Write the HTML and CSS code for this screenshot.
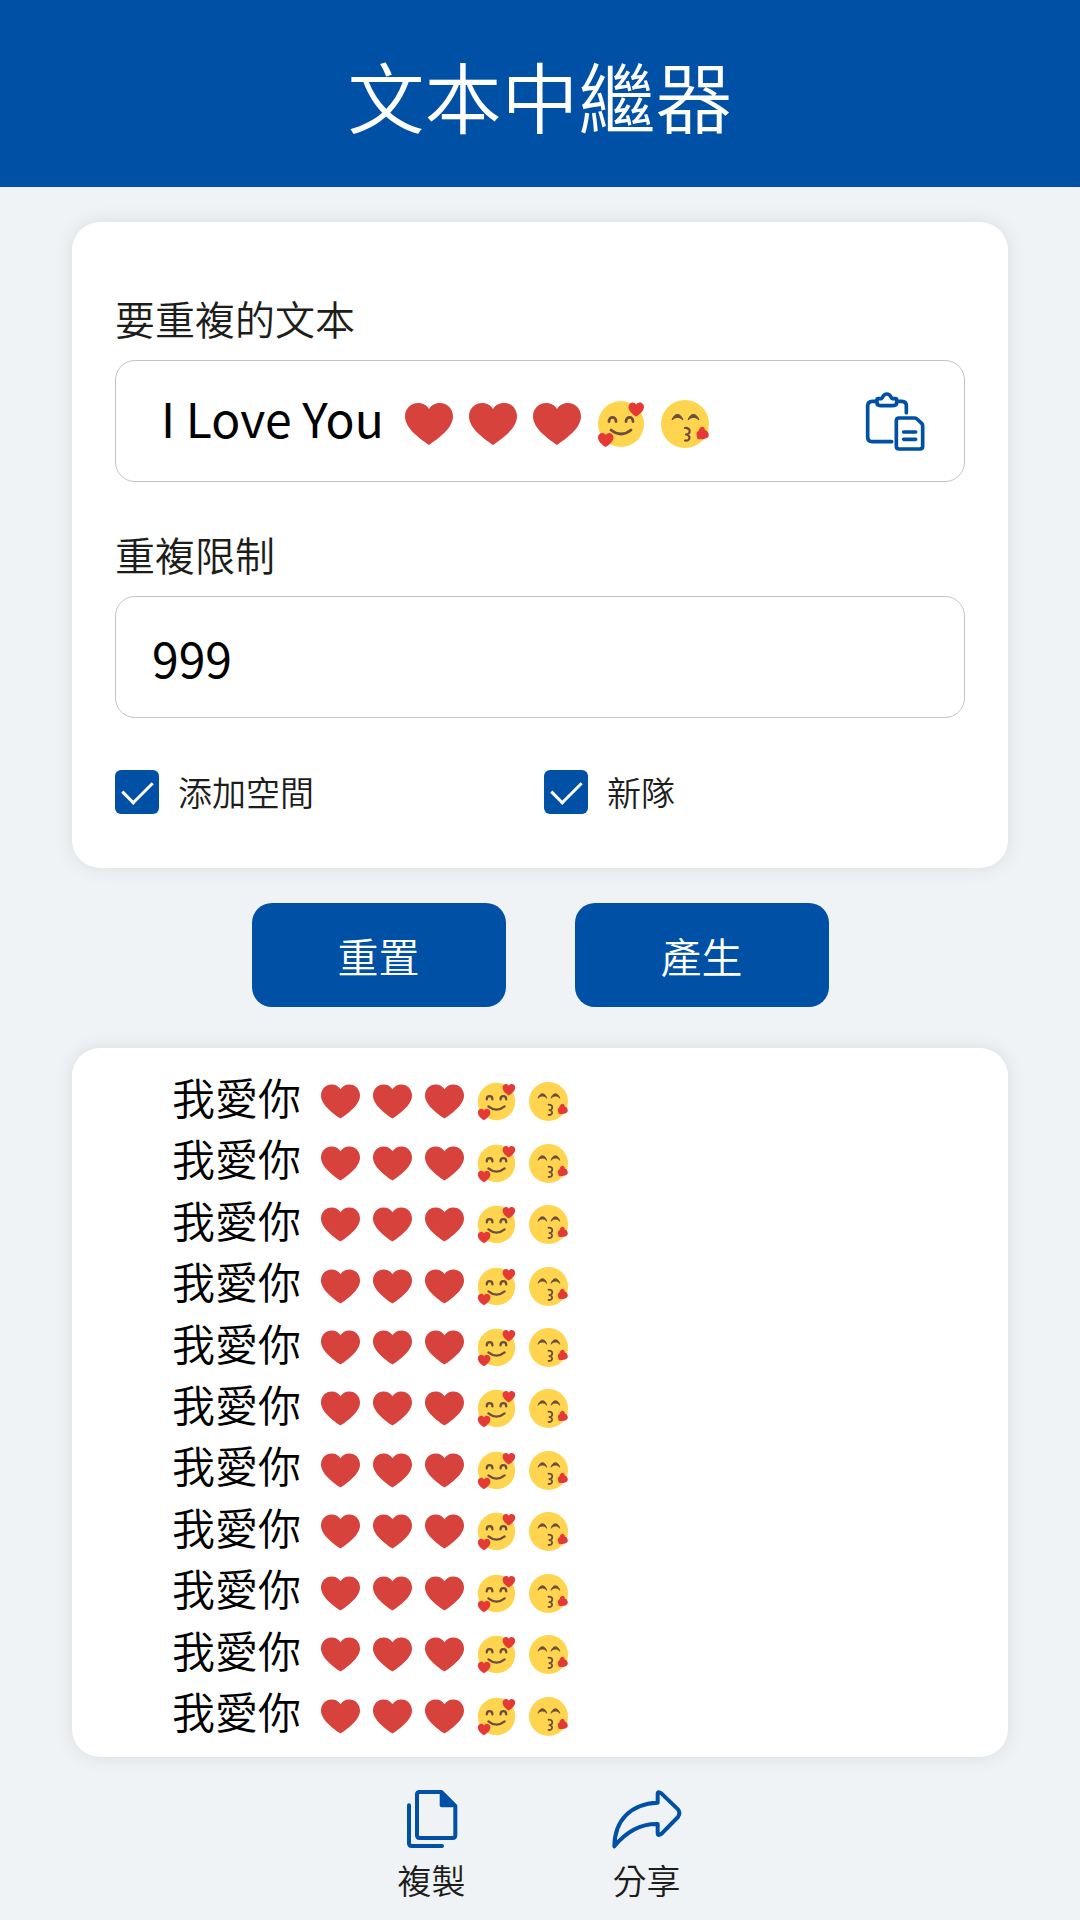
FILE: index.html
```html
<!DOCTYPE html>
<html lang="zh-Hant">
<head>
<meta charset="utf-8">
<meta name="viewport" content="width=device-width, initial-scale=1">
<title>文本中繼器</title>
<link rel="stylesheet" href="styles.css">
</head>
<body>
<svg class="sprite" aria-hidden="true">
  <symbol id="heart" viewBox="0 0 48 48">
    <path fill="#d7433c" d="M24 45C17 40 0 29 0 16.500C0 8.500 6 3 13 3C18 3 22 5.500 24 9C26 5.500 30 3 35 3C42 3 48 8.500 48 16.500C48 29 31 40 24 45Z"/>
  </symbol>
  <symbol id="love" viewBox="0 0 48 48">
    <circle cx="24" cy="24" r="23" fill="#ffd54f"/>
    <path d="M12 21.500C12 16 19 16 19 21.500M29 21.500C29 16 36 16 36 21.500M14 30Q24 38 34 30" fill="none" stroke="#6d4c41" stroke-width="2.800" stroke-linecap="round"/>
    <path fill="#e53935" d="M39 16.500C35 14 31.500 10.500 31.500 7C31.500 2 37.500 1 39.200 4.500C41 1 47 2 47 7C47 10.500 43 14.500 39 16.500Z"/>
    <path fill="#e53935" d="M8.500 47C4.500 44.500 1 41 1 37.500C1 32.500 7 31.500 8.700 35C10.500 31.500 16.500 32.500 16.500 37.500C16.500 41 12.500 45 8.500 47Z"/>
  </symbol>
  <symbol id="kiss" viewBox="0 0 48 48">
    <circle cx="24" cy="24" r="24" fill="#ffd54f"/>
    <path d="M11 20C13.500 12.500 19.500 12.500 22 20C18.500 16.500 14.500 16.500 11 20ZM27 20C29.500 12.500 35.500 12.500 38 20C34.500 16.500 30.500 16.500 27 20Z" fill="#6d4c41" stroke="#6d4c41" stroke-width="1" stroke-linejoin="round"/>
    <path d="M24 28C30 27.500 30 34 25 34.500C30 35 29.500 41.500 24 40.500" fill="none" stroke="#6d4c41" stroke-width="2.200" stroke-linecap="round" stroke-linejoin="round"/>
    <path fill="#e53935" d="M36 37C35 34 35.500 32 37.500 31C38.500 26 43.500 25 44 30C48 31 49 36.500 46 38C43 39.500 39 39.500 36.500 39Z"/>
  </symbol>
</svg>

<header class="header"><h1 class="title">文本中繼器</h1></header>

<main class="page">
  <form class="card form">
    <label class="label" for="text">要重複的文本</label>
    <div class="field">
      <input class="text-input" id="text" type="text" value="I Love You">
      <span class="emojis">
        <svg><use href="#heart"/></svg><svg><use href="#heart"/></svg><svg><use href="#heart"/></svg><svg><use href="#love"/></svg><svg><use href="#kiss"/></svg>
      </span>
      <button class="icon-button" type="button" aria-label="貼上">
        <svg class="paste-icon line-icon" viewBox="76 92 180 180">
          <path d="M156 244H98Q84 244 84 230V137Q84 123 98 123H110M174 123H186Q200 123 200 136V157"/>
          <path d="M116 115H125C130 113 129 101 141.500 101C154 101 153 113 158 115H167Q171 115 171 119V126Q171 136 161 136H122Q112 136 112 126V119Q112 115 116 115Z"/>
          <path d="M178 173H226Q229 173 232 176L246 189Q249 192 249 196V258Q249 266 241 266H178Q170 266 170 258V181Q170 173 178 173ZM192 215H228M192 237H228"/>
        </svg>
      </button>
    </div>
    <label class="label" for="limit">重複限制</label>
    <input class="field limit-input" id="limit" type="text" inputmode="numeric" value="999">
    <div class="options">
      <label class="option"><input class="check" type="checkbox" checked>添加空間</label>
      <label class="option"><input class="check" type="checkbox" checked>新隊</label>
    </div>
  </form>

  <div class="actions">
    <button class="button" type="button">重置</button>
    <button class="button" type="button">產生</button>
  </div>

  <ul class="card results" id="results"></ul>
</main>

<footer class="footer">
  <button class="tool" type="button">
    <svg class="copy-icon line-icon" viewBox="76 56 156 180">
      <path class="stroke-wide" d="M85 105V219Q85 227 93 227H184"/>
      <path class="stroke-wide" d="M117 65H182L224 107V195Q224 203 216 203H117Q109 203 109 195V73Q109 65 117 65Z"/>
      <path class="solid" d="M177 62H184L228 106V111H183Q177 111 177 105Z"/>
    </svg>
    <span>複製</span>
  </button>
  <button class="tool" type="button">
    <svg class="share-icon line-icon" viewBox="698 56 216 180">
      <path class="stroke-wide" d="M838 97V71Q838 61 849 69L899 117Q907 128 899 140L850 190Q838 199 838 188V161C785 160 742 186 708 228C709 150 757 100 838 97Z"/>
    </svg>
    <span>分享</span>
  </button>
</footer>
<script src="script.js"></script>
</body>
</html>
```
FILE: styles.css
```css
* {
  box-sizing: border-box;
}

body {
  margin: 0;
  background: #eff3f6;
  color: #1d1d1b;
  font-family: "Noto Sans CJK TC DemiLight", "Noto Sans CJK TC", "Noto Sans", sans-serif;
  font-weight: 350;
}

button,
input {
  font: inherit;
  color: inherit;
}

button {
  border: 0;
  padding: 0;
  background: none;
  cursor: pointer;
}

.sprite {
  position: absolute;
  width: 0;
  height: 0;
}

.header {
  padding: 40px 24px 37px;
  background: #0050a5;
  color: #fff;
  text-align: center;
}

.title {
  margin: 0;
  font-size: 77px;
  font-weight: 350;
  line-height: 110px;
}

.page {
  padding: 35px 72px 0;
}

.card {
  background: #fff;
  border-radius: 28px;
  box-shadow: 0 0 20px rgba(0, 0, 0, 0.09);
}

.form {
  display: flex;
  flex-direction: column;
  padding: 66px 43px 54px;
}

.label {
  margin-bottom: 12px;
  font-size: 40px;
  line-height: 60px;
}

.field {
  display: flex;
  align-items: center;
  height: 122px;
  margin-bottom: 42px;
  border: 1px solid #c4c4c4;
  border-radius: 20px;
  background: #fff;
}

.text-input,
.limit-input {
  color: #000;
  font-family: "Noto Sans CJK TC", "Noto Sans", sans-serif;
  font-size: 48px;
  font-weight: 400;
  outline: 0;
}

.text-input {
  width: 228px;
  margin-left: 45px;
  padding: 0 0 8px;
  border: 0;
  background: none;
}

.limit-input {
  width: 100%;
  padding: 0 36px;
}

.emojis {
  display: flex;
  gap: 16px;
  margin-left: 16px;
  padding-top: 6px;
}

.emojis svg {
  width: 48px;
  height: 48px;
}

.icon-button {
  display: flex;
  margin: 0 39px 0 auto;
}

.line-icon {
  fill: none;
  stroke: #0050a5;
  stroke-width: 11;
  stroke-linecap: round;
  stroke-linejoin: round;
}

.paste-icon {
  width: 60px;
  height: 60px;
}

.options {
  display: grid;
  grid-template-columns: 1fr 1fr;
  column-gap: 8px;
  padding-top: 10px;
}

.option {
  display: flex;
  align-items: center;
  gap: 19px;
  font-size: 34px;
  line-height: 44px;
}

.check {
  display: grid;
  place-items: center;
  width: 44px;
  height: 44px;
  margin: 0;
  appearance: none;
  border-radius: 6px;
  background: #0050a5;
}

.check:checked::before {
  content: "";
  width: 26px;
  height: 14px;
  margin-bottom: 8px;
  border: solid #fff;
  border-width: 0 0 3px 3px;
  transform: rotate(-45deg);
}

.actions {
  display: flex;
  justify-content: center;
  gap: 69px;
  padding: 35px 0 41px;
}

.button {
  width: 254px;
  height: 104px;
  border-radius: 20px;
  background: #0050a5;
  color: #fff;
  font-size: 41px;
}

.results {
  display: grid;
  grid-auto-rows: 1fr;
  min-height: 709px;
  margin: 0;
  padding: 17px 100px 16px;
  list-style: none;
}

.result {
  display: flex;
  align-items: center;
  color: #000;
  font-size: 43px;
  line-height: 60px;
}

.result .emojis {
  gap: 13px;
  margin-left: 20px;
  padding-top: 12px;
}

.result .emojis svg {
  width: 39px;
  height: 39px;
}

.footer {
  display: flex;
  justify-content: center;
  padding: 32px 2px 4px 0;
}

.tool {
  display: flex;
  flex-direction: column;
  align-items: center;
  width: 215px;
  gap: 7px;
  font-size: 34px;
  line-height: 48px;
}

.stroke-wide {
  stroke-width: 12;
}

.solid {
  fill: #0050a5;
  stroke: none;
}

.copy-icon {
  width: 52px;
  height: 60px;
}

.share-icon {
  width: 72px;
  height: 60px;
}
```
FILE: script.js
```js
const icons = ["heart", "heart", "heart", "love", "kiss"]
  .map((name) => `<svg><use href="#${name}"/></svg>`)
  .join("");

document.getElementById("results").innerHTML =
  `<li class="result">我愛你<span class="emojis">${icons}</span></li>`.repeat(11);
```
